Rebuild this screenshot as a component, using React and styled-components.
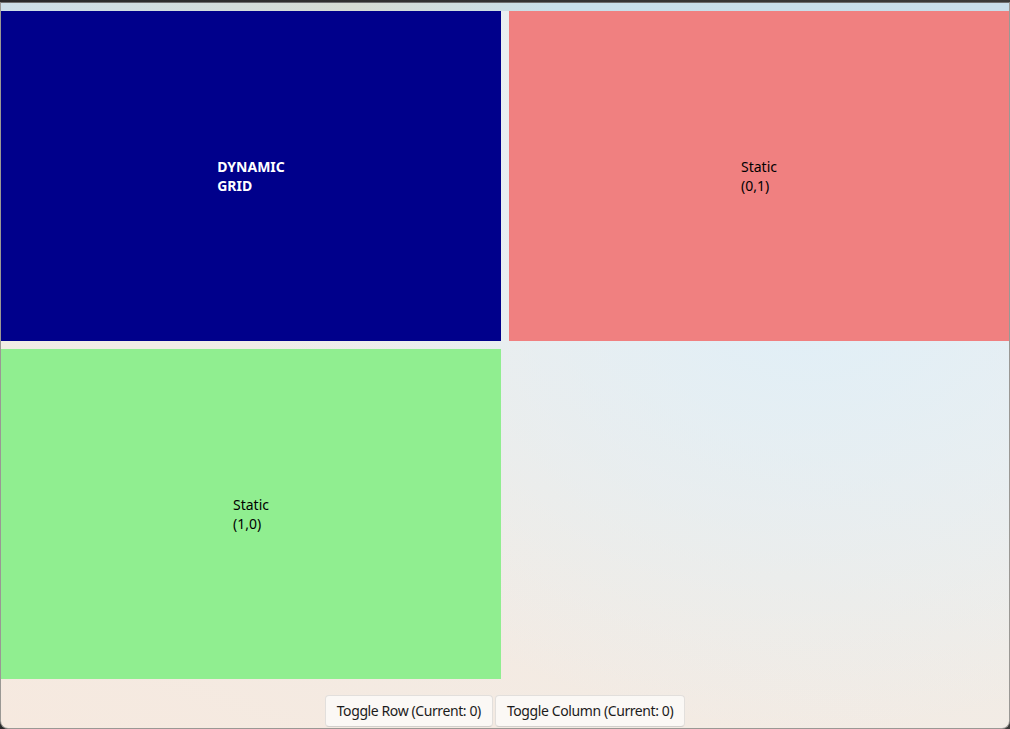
import React from "react";
import styled, { createGlobalStyle } from "styled-components";

const Global = createGlobalStyle`
  html, body { margin: 0; padding: 0; }
  body {
    width: 1010px;
    height: 729px;
    overflow: hidden;
    background: #4a4640;
    font-family: "Segoe UI", "Noto Sans", "Open Sans", sans-serif;
  }
`;

const Screen = styled.div`
  width: 1010px;
  height: 729px;
  display: flex;
  flex-direction: column;
  background: linear-gradient(90deg, #2a2a2a, #3b3a38);
`;

const Window = styled.div`
  margin-top: 2px;
  height: 725px;
  border: 1px solid #9a9894;
  border-top-color: #6f6f6f;
  border-radius: 0 0 8px 8px;
  overflow: hidden;
  display: flex;
  flex-direction: column;
  background:
    radial-gradient(ellipse 560px 440px at 80% 40%, rgba(224, 239, 247, 1), rgba(224, 239, 247, 0) 100%),
    linear-gradient(20deg, #f6e9df 0%, #f1ece6 40%, #eeeeee 65%, #e9eef0 100%);
`;

const TitleBar = styled.div`
  height: 8px;
  flex: none;
  background: linear-gradient(90deg, #cddfe8 0%, #d6dcd3 35%, #c8e0ea 55%, #c9deea 100%);
`;

const Grid = styled.div`
  display: grid;
  grid-template-columns: 500px 500px;
  grid-template-rows: 330px 330px;
  gap: 8px;
`;

const Cell = styled.div`
  background: ${(p) => p.$bg};
  color: ${(p) => p.$fg || "#000"};
  font-weight: ${(p) => (p.$bold ? 700 : 400)};
  font-size: 14px;
  line-height: 19px;
  display: flex;
  align-items: center;
  justify-content: center;
`;

const Label = styled.div`
  text-align: left;
`;

const ButtonRow = styled.div`
  margin-top: 16px;
  display: flex;
  justify-content: center;
  gap: 2px;
`;

const Button = styled.button`
  height: 32px;
  padding: 0 11px;
  background: rgba(251, 250, 248, 0.85);
  border: 1px solid #e2dfdc;
  border-bottom-color: #d2cfcc;
  border-radius: 4px;
  font-family: "Segoe UI", "Noto Sans", "Open Sans", sans-serif;
  font-size: 14px;
  letter-spacing: -0.4px;
  color: #1b1b1b;
  line-height: 30px;
`;

export default function App() {
  return (
    <>
      <Global />
      <Screen>
        <Window>
          <TitleBar />
          <Grid>
            <Cell $bg="#00008b" $fg="#ffffff" $bold>
              <Label>
                DYNAMIC
                <br />
                GRID
              </Label>
            </Cell>
            <Cell $bg="#f08080">
              <Label>
                Static
                <br />
                (0,1)
              </Label>
            </Cell>
            <Cell $bg="#90ee90">
              <Label>
                Static
                <br />
                (1,0)
              </Label>
            </Cell>
          </Grid>
          <ButtonRow>
            <Button>Toggle Row (Current: 0)</Button>
            <Button>Toggle Column (Current: 0)</Button>
          </ButtonRow>
        </Window>
      </Screen>
    </>
  );
}
